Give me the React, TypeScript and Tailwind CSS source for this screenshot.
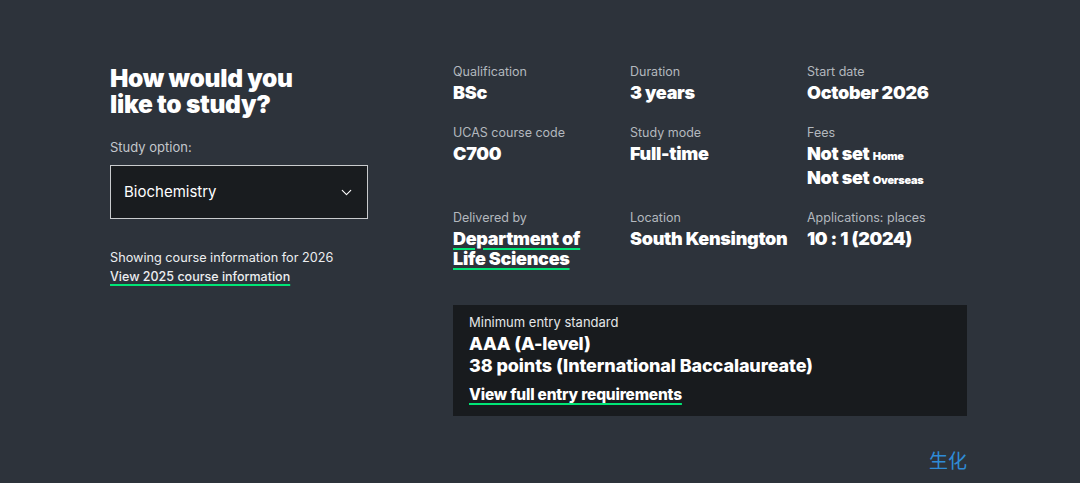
import { ChevronDown } from 'lucide-react';

const font = { fontFamily: 'Inter, "Noto Sans", sans-serif' };

const Cell = ({ label, children }: { label: string; children: React.ReactNode }) => (
  <div>
    <p className="text-[12.5px] leading-[18px] text-[#b3b8be]">{label}</p>
    <div className="mt-[2px] text-[18px] leading-[20px] font-black text-white tracking-[-0.3px]">{children}</div>
  </div>
);

const Link = ({ children, className = '' }: { children: React.ReactNode; className?: string }) => (
  <a
    href="#"
    className={`underline decoration-[#00e676] decoration-2 underline-offset-[3px] ${className}`}
  >
    {children}
  </a>
);

export default function App() {
  return (
    <div className="w-[1080px] h-[483px] bg-[#2d333b] text-white overflow-hidden" style={font}>
      <div className="flex pl-[110px] pt-[63px]">
        {/* Left: study option */}
        <div className="w-[343px] pt-[2px]">
          <h2 className="text-[24.5px] leading-[26px] font-black tracking-[-0.3px]">
            How would you
            <br />
            like to study?
          </h2>
          <p className="mt-[21px] text-[13px] leading-[18px] text-[#c3c7cc]">Study option:</p>
          <button className="mt-[9px] w-[258px] h-[54px] flex items-center justify-between pl-[13px] pr-[12px] bg-[#191c1f] border border-[#c9cbcd] text-[15px] text-white">
            <span>Biochemistry</span>
            <ChevronDown size={17} strokeWidth={1.6} />
          </button>
          <p className="mt-[29px] text-[12.7px] leading-[19px] text-[#eceef0]">
            Showing course information for 2026
          </p>
          <p className="text-[12.5px] leading-[19px] font-medium text-[#eceef0]">
            <Link>View 2025 course information</Link>
          </p>
        </div>

        {/* Right: course facts */}
        <div className="w-[514px]">
          <div className="grid grid-cols-[177px_177px_1fr] gap-y-[21px]">
            <Cell label="Qualification">BSc</Cell>
            <Cell label="Duration">3 years</Cell>
            <Cell label="Start date">October 2026</Cell>
            <Cell label="UCAS course code">C700</Cell>
            <Cell label="Study mode">Full-time</Cell>
            <Cell label="Fees">
              <p className="h-[20px]">
                Not set <span className="text-[11px] leading-none font-black">Home</span>
              </p>
              <p className="mt-[4px] h-[20px]">
                Not set <span className="text-[11px] leading-none font-black">Overseas</span>
              </p>
            </Cell>
            <Cell label="Delivered by">
              <Link>
                Department of
                <br />
                Life Sciences
              </Link>
            </Cell>
            <Cell label="Location">South Kensington</Cell>
            <Cell label="Applications: places">10 : 1 (2024)</Cell>
          </div>

          <div className="mt-[36px] bg-[#181b1e] pl-[16px] pt-[8px] pb-[10px]">
            <p className="text-[13px] leading-[18px] text-[#e4e6e8]">Minimum entry standard</p>
            <p className="mt-[2px] text-[18px] leading-[22px] font-extrabold tracking-[-0.2px]">AAA (A-level)</p>
            <p className="text-[18px] leading-[22px] font-extrabold tracking-[-0.1px]">
              38 points (International Baccalaureate)
            </p>
            <p className="mt-[7px] text-[15.5px] leading-[22px] font-extrabold tracking-[-0.2px]">
              <Link>View full entry requirements</Link>
            </p>
          </div>

          <div className="mt-[32px] flex justify-end">
            <span
              className="text-[19px] leading-[24px] text-[#2f8bd6]"
              style={{ fontFamily: '"Noto Sans CJK SC", sans-serif' }}
            >
              生化
            </span>
          </div>
        </div>
      </div>
    </div>
  );
}
